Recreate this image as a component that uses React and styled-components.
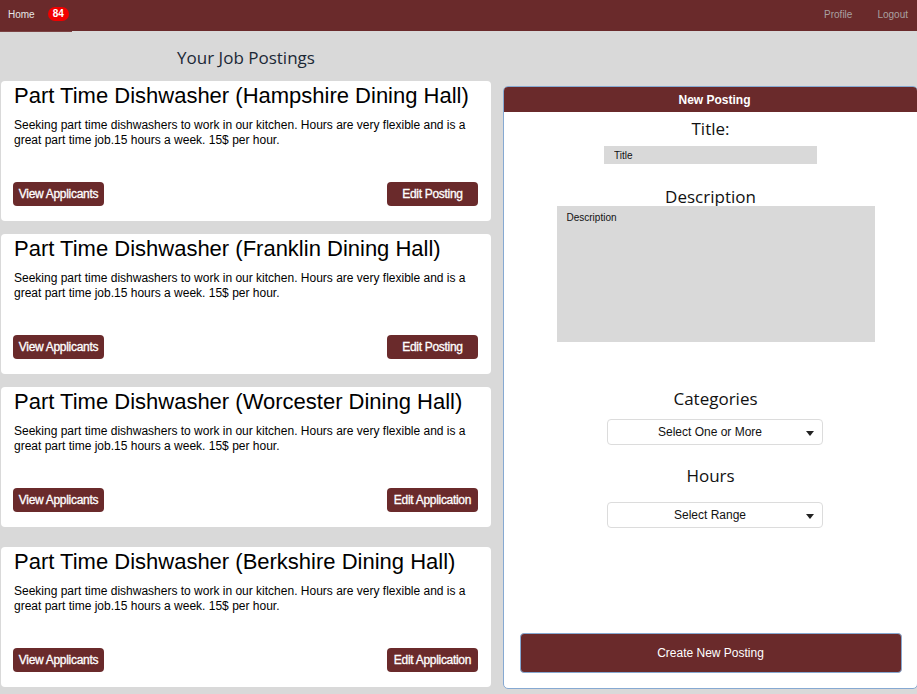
import React from "react";
import styled, { createGlobalStyle } from "styled-components";

const maroon = "#6a2a2b";

const GlobalStyle = createGlobalStyle`
  html, body {
    margin: 0;
    padding: 0;
    background: #d9d9d9;
    font-family: "Liberation Sans", Arial, sans-serif;
  }
  * { box-sizing: border-box; }
`;

const postings = [
  { hall: "Hampshire", action: "Edit Posting" },
  { hall: "Franklin", action: "Edit Posting" },
  { hall: "Worcester", action: "Edit Application" },
  { hall: "Berkshire", action: "Edit Application", spaced: true },
];

const descripcion =
  "Seeking part time dishwashers to work in our kitchen. Hours are very flexible and is a great part time job.15 hours a week. 15$ per hour.";

const App = () => {
  return (
    <>
      <GlobalStyle />
      <NavBar>
        <HomeTab>
          <NavLink $active>Home</NavLink>
          <Badge>84</Badge>
        </HomeTab>
        <NavRight>
          <NavLink>Profile</NavLink>
          <NavLink>Logout</NavLink>
        </NavRight>
      </NavBar>

      <Contenido>
        <ColumnaPostings>
          <Encabezado>Your Job Postings</Encabezado>
          <ListaPostings>
            {postings.map((p) => (
              <Tarjeta key={p.hall} $spaced={p.spaced}>
                <TituloTarjeta>Part Time Dishwasher ({p.hall} Dining Hall)</TituloTarjeta>
                <Descripcion>{descripcion}</Descripcion>
                <FilaBotones>
                  <Boton>View Applicants</Boton>
                  <Boton>{p.action}</Boton>
                </FilaBotones>
              </Tarjeta>
            ))}
          </ListaPostings>
        </ColumnaPostings>

        <Panel>
          <PanelHeader>New Posting</PanelHeader>
          <PanelBody>
            <Etiqueta>Title:</Etiqueta>
            <CampoTitulo placeholder="Title" />
            <Etiqueta $top={21}>Description</Etiqueta>
            <CampoDescripcion placeholder="Description" />
            <Etiqueta $top={45} $shift={10}>Categories</Etiqueta>
            <Selector $top={9}>
              <span>Select One or More</span>
              <Flecha />
            </Selector>
            <Etiqueta $top={19}>Hours</Etiqueta>
            <Selector $top={15}>
              <span>Select Range</span>
              <Flecha />
            </Selector>
            <BotonCrear>Create New Posting</BotonCrear>
          </PanelBody>
        </Panel>
      </Contenido>
    </>
  );
};

const NavBar = styled.nav`
  height: 31px;
  background: ${maroon};
  display: flex;
  align-items: stretch;
  justify-content: space-between;
  padding: 0 9px 0 0;
`;

const HomeTab = styled.div`
  display: flex;
  align-items: center;
  gap: 13px;
  width: 72px;
  padding-left: 8px;
  margin-bottom: -1px;
  border-bottom: 1px solid #7c4343;
`;

const NavRight = styled.div`
  display: flex;
  align-items: center;
  gap: 25px;
`;

const NavLink = styled.span`
  font-size: 10px;
  color: ${(p) => (p.$active ? "#e6e6e6" : "#a9a0a0")};
  cursor: pointer;
  margin-top: -3px;
`;

const Badge = styled.span`
  background: #f20000;
  color: #fff;
  font-size: 10px;
  font-weight: bold;
  border-radius: 8px;
  padding: 1px 5px;
  line-height: 12px;
  margin-top: -3px;
`;

const Contenido = styled.main`
  display: grid;
  grid-template-columns: 490px 415px;
  column-gap: 12px;
  align-items: start;
  padding-left: 1px;
`;

const ColumnaPostings = styled.section`
  display: flex;
  flex-direction: column;
`;

const Encabezado = styled.h1`
  margin: 15px 0 12px;
  font-family: "Open Sans", sans-serif;
  font-weight: normal;
  font-size: 17px;
  line-height: 23px;
  color: #1b2836;
  text-align: center;
`;

const ListaPostings = styled.div`
  display: flex;
  flex-direction: column;
  gap: 13px;
`;

const Tarjeta = styled.article`
  background: #fff;
  border-radius: 4px;
  height: 140px;
  padding: 2px 13px 15px 12px;
  display: flex;
  flex-direction: column;
  margin-top: ${(p) => (p.$spaced ? "7px" : "0")};
`;

const TituloTarjeta = styled.h2`
  margin: 0 0 0 1px;
  font-size: 22px;
  line-height: 25px;
  font-weight: normal;
  color: #000;
`;

const Descripcion = styled.p`
  margin: 10px 0 0 1px;
  font-size: 12px;
  line-height: 15px;
  color: #000;
`;

const FilaBotones = styled.div`
  margin-top: auto;
  display: flex;
  justify-content: space-between;
  align-items: center;
`;

const Boton = styled.button`
  width: 91px;
  height: 24px;
  padding: 0 3px;
  border: none;
  border-radius: 4px;
  background: ${maroon};
  color: #fff;
  font-family: "Liberation Sans", Arial, sans-serif;
  font-size: 12px;
  letter-spacing: -0.3px;
  white-space: nowrap;
  cursor: pointer;
  -webkit-text-stroke: 0.3px #fff;
`;

const Panel = styled.section`
  margin-top: 55px;
  height: 603px;
  background: #fff;
  border: 1px solid #86a9d2;
  border-radius: 5px;
  display: flex;
  flex-direction: column;
  overflow: hidden;
`;

const PanelHeader = styled.header`
  height: 25px;
  background: ${maroon};
  color: #fff;
  font-size: 12px;
  font-weight: bold;
  display: flex;
  align-items: center;
  justify-content: center;
  padding-left: 8px;
`;

const PanelBody = styled.div`
  flex: 1;
  display: flex;
  flex-direction: column;
  align-items: center;
  padding: 5px 15px 15px 15px;
`;

const Etiqueta = styled.label`
  margin-top: ${(p) => p.$top || 0}px;
  margin-left: ${(p) => p.$shift || 0}px;
  font-family: "Open Sans", sans-serif;
  font-size: 17px;
  line-height: 23px;
  color: #111;
`;

const CampoTitulo = styled.input`
  margin-top: 6px;
  width: 213px;
  height: 18px;
  border: none;
  background: #d9d9d9;
  padding: 0 10px;
  font-family: "Liberation Sans", Arial, sans-serif;
  font-size: 10px;
  outline: none;
  &::placeholder { color: #111; }
`;

const CampoDescripcion = styled.textarea`
  margin-top: -2px;
  margin-left: 10px;
  width: 318px;
  height: 136px;
  border: none;
  background: #d9d9d9;
  padding: 6px 10px;
  resize: none;
  font-family: "Liberation Sans", Arial, sans-serif;
  font-size: 10px;
  outline: none;
  &::placeholder { color: #111; }
`;

const Selector = styled.div`
  margin-top: ${(p) => p.$top || 0}px;
  margin-left: 9px;
  width: 216px;
  height: 26px;
  border: 1px solid #dcdcdc;
  border-radius: 4px;
  background: #fff;
  display: flex;
  align-items: center;
  justify-content: center;
  position: relative;
  font-size: 12px;
  color: #111;
  padding-right: 10px;
`;

const Flecha = styled.span`
  position: absolute;
  right: 8px;
  top: 11px;
  border-left: 4px solid transparent;
  border-right: 4px solid transparent;
  border-top: 5px solid #222;
`;

const BotonCrear = styled.button`
  margin-top: auto;
  width: 382px;
  height: 40px;
  background: ${maroon};
  border: 1px solid #86a9d2;
  border-radius: 4px;
  color: #fff;
  font-family: "Liberation Sans", Arial, sans-serif;
  font-size: 12px;
  cursor: pointer;
`;

export default App;
